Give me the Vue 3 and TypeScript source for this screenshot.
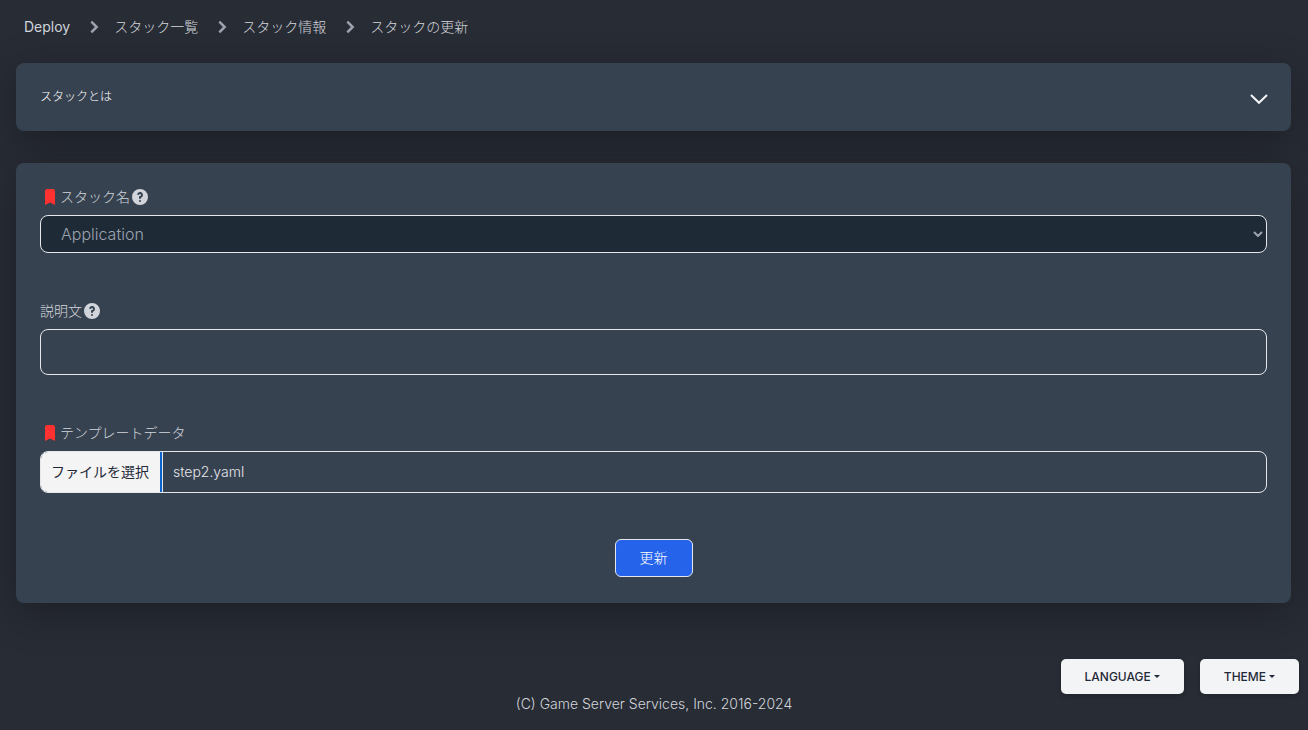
<script setup lang="ts">
import { ref } from 'vue'

const crumbs = ['Deploy', 'スタック一覧', 'スタック情報', 'スタックの更新']
const stackName = ref('Application')
const description = ref('')
const fileName = ref('step2.yaml')

function onFileChange(event: Event) {
  const file = (event.target as HTMLInputElement).files?.[0]
  if (file) fileName.value = file.name
}
</script>

<template>
  <div class="page">
    <nav class="breadcrumb" aria-label="breadcrumb">
      <template v-for="(crumb, i) in crumbs" :key="crumb">
        <svg v-if="i > 0" class="separator" viewBox="0 0 24 24" aria-hidden="true">
          <path d="M8.8 5.5 15.2 12l-6.4 6.5" />
        </svg>
        <a href="#" class="crumb" :class="{ root: i === 0 }">{{ crumb }}</a>
      </template>
    </nav>

    <main class="content">
      <button type="button" class="card accordion">
        <span>スタックとは</span>
        <svg class="expand" viewBox="0 0 18 18" aria-hidden="true">
          <path d="M1 5 9 12.8l8-7.8" />
        </svg>
      </button>

      <form class="card form" @submit.prevent>
        <div class="field">
          <div class="caption">
            <svg class="required" viewBox="0 0 20 20" aria-hidden="true">
              <path d="M5 4a2 2 0 0 1 2-2h6a2 2 0 0 1 2 2v14l-5-2.5L5 18z" />
            </svg>
            <label for="stack-name">スタック名</label>
            <svg class="help" viewBox="0 0 20 20" aria-hidden="true">
              <path fill-rule="evenodd" clip-rule="evenodd" d="M18 10a8 8 0 11-16 0 8 8 0 0116 0zm-8-3a1 1 0 00-.867.5 1 1 0 11-1.731-1A3 3 0 0113 8a3.001 3.001 0 01-2 2.83V11a1 1 0 11-2 0v-1a1 1 0 011-1 1 1 0 100-2zm0 8a1 1 0 100-2 1 1 0 000 2z" />
            </svg>
          </div>
          <div class="select-wrap">
            <select id="stack-name" v-model="stackName" class="control select">
              <option>Application</option>
            </select>
            <svg class="arrow" viewBox="0 0 10 6" aria-hidden="true">
              <path d="M1 1l4 4 4-4" />
            </svg>
          </div>
        </div>

        <div class="field">
          <div class="caption">
            <label for="description">説明文</label>
            <svg class="help" viewBox="0 0 20 20" aria-hidden="true">
              <path fill-rule="evenodd" clip-rule="evenodd" d="M18 10a8 8 0 11-16 0 8 8 0 0116 0zm-8-3a1 1 0 00-.867.5 1 1 0 11-1.731-1A3 3 0 0113 8a3.001 3.001 0 01-2 2.83V11a1 1 0 11-2 0v-1a1 1 0 011-1 1 1 0 100-2zm0 8a1 1 0 100-2 1 1 0 000 2z" />
            </svg>
          </div>
          <input id="description" v-model="description" type="text" class="control text" />
        </div>

        <div class="field">
          <div class="caption">
            <svg class="required" viewBox="0 0 20 20" aria-hidden="true">
              <path d="M5 4a2 2 0 0 1 2-2h6a2 2 0 0 1 2 2v14l-5-2.5L5 18z" />
            </svg>
            <label for="template-file">テンプレートデータ</label>
          </div>
          <label class="control file">
            <input id="template-file" type="file" class="file-input" @change="onFileChange" />
            <span class="choose">ファイルを選択</span>
            <span class="file-name">{{ fileName }}</span>
          </label>
        </div>

        <button type="submit" class="submit">更新</button>
      </form>
    </main>

    <footer class="footer">
      <div class="menus">
        <button type="button" class="menu">LANGUAGE<i class="caret"></i></button>
        <button type="button" class="menu">THEME<i class="caret"></i></button>
      </div>
      <p class="copyright">(C) Game Server Services, Inc. 2016-2024</p>
    </footer>
  </div>
</template>

<style>
body {
  background: #282c35;
}
</style>

<style scoped>
.page {
  min-height: 100vh;
  box-sizing: border-box;
  overflow: hidden;
  background: #282c35;
  color: #d1d5db;
  font: 14px/20px Inter, "Noto Sans CJK JP", sans-serif;
}

.page button,
.page input,
.page select {
  font-family: inherit;
  margin: 0;
}

.breadcrumb {
  display: flex;
  align-items: center;
  padding: 17px 24px 26px;
}

.crumb {
  color: #d1d5db;
  text-decoration: none;
  font-weight: 300;
}

.crumb.root {
  font-weight: 400;
}

.separator {
  width: 20px;
  height: 20px;
  margin: 0 10px 0 14px;
  fill: none;
  stroke: #9ca3af;
  stroke-width: 3;
}

.content {
  display: grid;
  gap: 32px;
  padding: 0 17px 0 16px;
}

.card {
  background: #374250;
  border-radius: 8px;
  box-shadow: 0 10px 40px rgba(0, 0, 0, 0.3);
}

.accordion {
  display: flex;
  justify-content: space-between;
  align-items: center;
  min-height: 68px;
  padding: 0 23px 0 24px;
  border: 0;
  color: #fff;
  font-size: 12px;
  font-weight: 300;
  line-height: 18px;
  text-align: left;
}

.expand {
  width: 18px;
  height: 18px;
  margin-top: 4px;
  fill: none;
  stroke: #f3f4f6;
  stroke-width: 2;
}

.form {
  display: flex;
  flex-direction: column;
  padding: 24px 24px 26px;
}

.field {
  margin-bottom: 48px;
}

.field:last-of-type {
  margin-bottom: 46px;
}

.caption {
  display: flex;
  align-items: center;
  height: 20px;
  margin-bottom: 8px;
  font-weight: 300;
}

.required {
  width: 20px;
  height: 20px;
  fill: #ff3131;
}

.help {
  width: 20px;
  height: 20px;
  fill: #d1d5db;
}

.control {
  display: block;
  box-sizing: border-box;
  width: 100%;
  border: 1px solid #e5e7eb;
  border-radius: 8px;
  background: transparent;
  color: #d1d5db;
}

.select-wrap {
  position: relative;
}

.select {
  height: 38px;
  padding: 0 20px;
  appearance: none;
  background: #1f2a37;
  color: #9ca3af;
  font-size: 16px;
  font-weight: 350;
}

.arrow {
  position: absolute;
  top: 16px;
  right: 4px;
  width: 10px;
  height: 6px;
  fill: none;
  stroke: #9ca3af;
  stroke-width: 2;
  pointer-events: none;
}

.text {
  height: 46px;
  padding: 0 16px;
  font-size: 16px;
}

.file {
  position: relative;
  display: flex;
  height: 42px;
  overflow: hidden;
  line-height: 40px;
}

.file-input {
  position: absolute;
  inset: 0;
  opacity: 0;
}

.choose {
  padding: 0 11px 0 10px;
  border-right: 2px solid #0b63ce;
  background: #f4f4f5;
  color: #1f2937;
}

.file-name {
  flex: 1;
  padding-left: 10px;
  border-left: 1px solid #e5e7eb;
  color: #e5e7eb;
  font-weight: 350;
}

.submit {
  align-self: center;
  height: 38px;
  padding: 0 24px;
  border: 1px solid #e5e7eb;
  border-radius: 6px;
  background: #2563eb;
  color: #fff;
  font-size: 14px;
  font-weight: 300;
  line-height: 20px;
}

.footer {
  padding: 56px 9px 16px;
}

.menus {
  display: flex;
  justify-content: flex-end;
  gap: 16px;
}

.menu {
  display: flex;
  align-items: center;
  gap: 3px;
  height: 35px;
  padding: 0 24px;
  border: 0;
  border-radius: 5px;
  background: #f3f4f6;
  color: #1f2937;
  font-size: 12px;
  font-weight: 500;
  box-shadow: 0 2px 5px rgba(0, 0, 0, 0.2);
}

.caret {
  border: 3px solid transparent;
  border-top-color: #1f2937;
  border-bottom: 0;
}

.copyright {
  margin: 0;
  text-align: center;
  font-weight: 350;
}
</style>
